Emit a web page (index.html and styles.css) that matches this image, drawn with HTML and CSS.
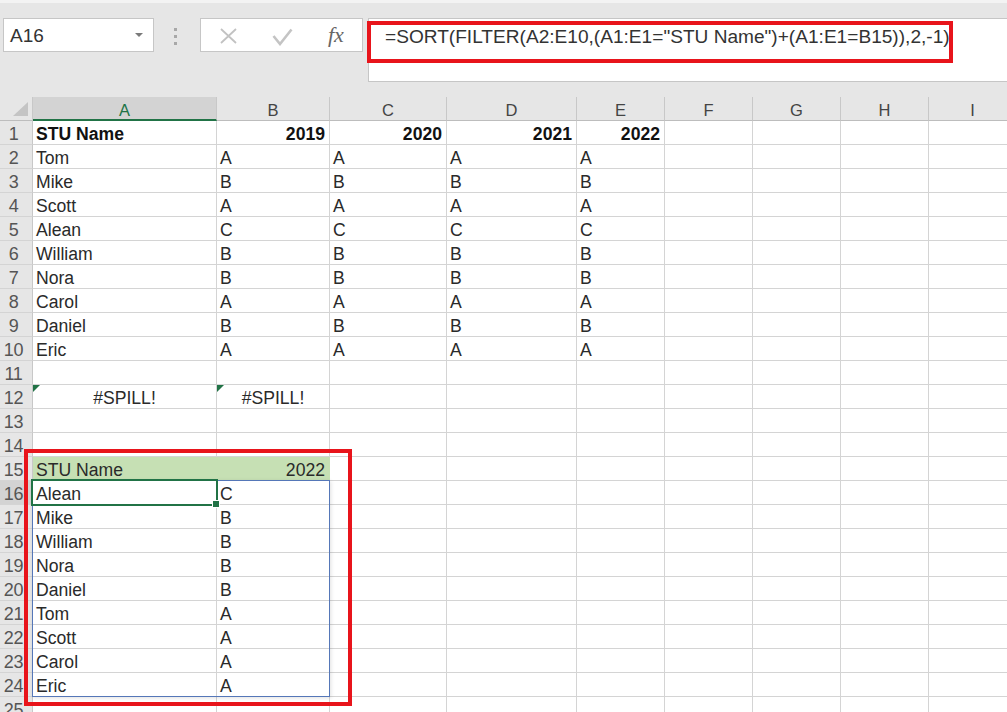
FILE: index.html
```html
<!DOCTYPE html>
<html>
<head>
<meta charset="utf-8">
<link rel="stylesheet" href="styles.css">
</head>
<body>
<div class="app">
  <div class="topstrip"></div>
  <div class="toolbar">
    <div class="namebox"><span class="nbtext">A16</span><span class="caret"></span></div>
    <div class="dots"><i></i><i></i><i></i></div>
    <div class="fbuttons">
      <svg class="ico-x" width="17" height="16" viewBox="0 0 17 16"><path d="M1 1 L16 15 M16 1 L1 15" stroke="#c2c2c2" stroke-width="1.8" fill="none"/></svg>
      <svg class="ico-ok" width="21" height="18" viewBox="0 0 21 18"><path d="M1.5 8 L8 16 L19.5 1.5" stroke="#c4c4c4" stroke-width="2.6" fill="none"/></svg>
      <span class="fx">fx</span>
    </div>
    <div class="formula"><span class="ftext">=SORT(FILTER(A2:E10,(A1:E1="STU Name")+(A1:E1=B15)),2,-1)</span></div>
  </div>

  <div class="sheet">
    <div class="row hdr"><div class="corner"><span class="tri"></span></div><div class="h sel">A</div><div class="h">B</div><div class="h">C</div><div class="h">D</div><div class="h">E</div><div class="h">F</div><div class="h">G</div><div class="h">H</div><div class="h">I</div></div>
    <div class="row"><div class="rh">1</div><div class="c b">STU Name</div><div class="c b r">2019</div><div class="c b r">2020</div><div class="c b r">2021</div><div class="c b r">2022</div><div class="c"></div><div class="c"></div><div class="c"></div><div class="c"></div></div>
    <div class="row"><div class="rh">2</div><div class="c">Tom</div><div class="c">A</div><div class="c">A</div><div class="c">A</div><div class="c">A</div><div class="c"></div><div class="c"></div><div class="c"></div><div class="c"></div></div>
    <div class="row"><div class="rh">3</div><div class="c">Mike</div><div class="c">B</div><div class="c">B</div><div class="c">B</div><div class="c">B</div><div class="c"></div><div class="c"></div><div class="c"></div><div class="c"></div></div>
    <div class="row"><div class="rh">4</div><div class="c">Scott</div><div class="c">A</div><div class="c">A</div><div class="c">A</div><div class="c">A</div><div class="c"></div><div class="c"></div><div class="c"></div><div class="c"></div></div>
    <div class="row"><div class="rh">5</div><div class="c">Alean</div><div class="c">C</div><div class="c">C</div><div class="c">C</div><div class="c">C</div><div class="c"></div><div class="c"></div><div class="c"></div><div class="c"></div></div>
    <div class="row"><div class="rh">6</div><div class="c">William</div><div class="c">B</div><div class="c">B</div><div class="c">B</div><div class="c">B</div><div class="c"></div><div class="c"></div><div class="c"></div><div class="c"></div></div>
    <div class="row"><div class="rh">7</div><div class="c">Nora</div><div class="c">B</div><div class="c">B</div><div class="c">B</div><div class="c">B</div><div class="c"></div><div class="c"></div><div class="c"></div><div class="c"></div></div>
    <div class="row"><div class="rh">8</div><div class="c">Carol</div><div class="c">A</div><div class="c">A</div><div class="c">A</div><div class="c">A</div><div class="c"></div><div class="c"></div><div class="c"></div><div class="c"></div></div>
    <div class="row"><div class="rh">9</div><div class="c">Daniel</div><div class="c">B</div><div class="c">B</div><div class="c">B</div><div class="c">B</div><div class="c"></div><div class="c"></div><div class="c"></div><div class="c"></div></div>
    <div class="row"><div class="rh">10</div><div class="c">Eric</div><div class="c">A</div><div class="c">A</div><div class="c">A</div><div class="c">A</div><div class="c"></div><div class="c"></div><div class="c"></div><div class="c"></div></div>
    <div class="row"><div class="rh">11</div><div class="c"></div><div class="c"></div><div class="c"></div><div class="c"></div><div class="c"></div><div class="c"></div><div class="c"></div><div class="c"></div><div class="c"></div></div>
    <div class="row"><div class="rh">12</div><div class="c ctr err">#SPILL!</div><div class="c ctr err">#SPILL!</div><div class="c"></div><div class="c"></div><div class="c"></div><div class="c"></div><div class="c"></div><div class="c"></div><div class="c"></div></div>
    <div class="row"><div class="rh">13</div><div class="c"></div><div class="c"></div><div class="c"></div><div class="c"></div><div class="c"></div><div class="c"></div><div class="c"></div><div class="c"></div><div class="c"></div></div>
    <div class="row"><div class="rh">14</div><div class="c"></div><div class="c"></div><div class="c"></div><div class="c"></div><div class="c"></div><div class="c"></div><div class="c"></div><div class="c"></div><div class="c"></div></div>
    <div class="row"><div class="rh">15</div><div class="c g">STU Name</div><div class="c g r">2022</div><div class="c"></div><div class="c"></div><div class="c"></div><div class="c"></div><div class="c"></div><div class="c"></div><div class="c"></div></div>
    <div class="row"><div class="rh rsel">16</div><div class="c">Alean</div><div class="c">C</div><div class="c"></div><div class="c"></div><div class="c"></div><div class="c"></div><div class="c"></div><div class="c"></div><div class="c"></div></div>
    <div class="row"><div class="rh">17</div><div class="c">Mike</div><div class="c">B</div><div class="c"></div><div class="c"></div><div class="c"></div><div class="c"></div><div class="c"></div><div class="c"></div><div class="c"></div></div>
    <div class="row"><div class="rh">18</div><div class="c">William</div><div class="c">B</div><div class="c"></div><div class="c"></div><div class="c"></div><div class="c"></div><div class="c"></div><div class="c"></div><div class="c"></div></div>
    <div class="row"><div class="rh">19</div><div class="c">Nora</div><div class="c">B</div><div class="c"></div><div class="c"></div><div class="c"></div><div class="c"></div><div class="c"></div><div class="c"></div><div class="c"></div></div>
    <div class="row"><div class="rh">20</div><div class="c">Daniel</div><div class="c">B</div><div class="c"></div><div class="c"></div><div class="c"></div><div class="c"></div><div class="c"></div><div class="c"></div><div class="c"></div></div>
    <div class="row"><div class="rh">21</div><div class="c">Tom</div><div class="c">A</div><div class="c"></div><div class="c"></div><div class="c"></div><div class="c"></div><div class="c"></div><div class="c"></div><div class="c"></div></div>
    <div class="row"><div class="rh">22</div><div class="c">Scott</div><div class="c">A</div><div class="c"></div><div class="c"></div><div class="c"></div><div class="c"></div><div class="c"></div><div class="c"></div><div class="c"></div></div>
    <div class="row"><div class="rh">23</div><div class="c">Carol</div><div class="c">A</div><div class="c"></div><div class="c"></div><div class="c"></div><div class="c"></div><div class="c"></div><div class="c"></div><div class="c"></div></div>
    <div class="row"><div class="rh">24</div><div class="c">Eric</div><div class="c">A</div><div class="c"></div><div class="c"></div><div class="c"></div><div class="c"></div><div class="c"></div><div class="c"></div><div class="c"></div></div>
    <div class="row"><div class="rh">25</div><div class="c"></div><div class="c"></div><div class="c"></div><div class="c"></div><div class="c"></div><div class="c"></div><div class="c"></div><div class="c"></div><div class="c"></div></div>
  </div>

  <div class="spill-range"></div>
  <div class="active-cell"></div>
  <div class="fill-handle"></div>
  <div class="mark mark-formula"></div>
  <div class="mark mark-range"></div>
</div>
</body>
</html>
```

FILE: styles.css
```css
html, body {
  margin: 0;
  padding: 0;
}
body {
  background: #e6e6e6;
  font-family: "Liberation Sans", Arial, sans-serif;
  overflow: hidden;
}
.app {
  position: relative;
  width: 1007px;
  height: 712px;
  overflow: hidden;
  background: #e6e6e6;
}
.topstrip {
  height: 3px;
  background: #f3f3f3;
}
.toolbar {
  height: 94px;
  box-sizing: border-box;
  padding: 15px 0 0 3px;
  display: flex;
  align-items: flex-start;
}
.namebox {
  width: 151px;
  height: 34px;
  box-sizing: border-box;
  background: #fff;
  border: 1px solid #c6c6c6;
  display: flex;
  align-items: center;
  padding: 2px 0 0 6px;
  position: relative;
}
.nbtext {
  font-size: 19px;
  color: #333;
  flex: 1;
}
.caret {
  width: 0;
  height: 0;
  border-left: 4px solid transparent;
  border-right: 4px solid transparent;
  border-top: 4px solid #7a7a7a;
  margin-right: 10px;
  margin-top: -2px;
}
.dots {
  margin: 10px 0 0 20px;
  width: 4px;
  display: flex;
  flex-direction: column;
  gap: 4px;
}
.dots i {
  display: block;
  width: 3px;
  height: 3px;
  background: #a8a8a8;
}
.fbuttons {
  margin-left: 22px;
  width: 163px;
  height: 34px;
  box-sizing: border-box;
  background: #fff;
  border: 1px solid #c6c6c6;
  display: flex;
  align-items: center;
  padding-left: 19px;
}
.ico-x {
  display: block;
  margin-top: 1px;
}
.ico-ok {
  display: block;
  margin-left: 35px;
  margin-top: 3px;
}
.fx {
  margin-left: 35px;
  font-family: "Liberation Serif", "Times New Roman", serif;
  font-style: italic;
  font-size: 22px;
  color: #666;
  margin-top: -1px;
}
.formula {
  margin-left: 5px;
  flex: 1;
  height: 64px;
  box-sizing: border-box;
  background: #fff;
  border: 1px solid #c6c6c6;
  border-right: none;
  padding: 6px 0 0 16px;
}
.ftext {
  font-size: 19.1px;
  line-height: 24px;
  color: #333;
  white-space: nowrap;
}

.sheet {
  width: 1007px;
  overflow: hidden;
  background: #fff;
}
.row {
  display: grid;
  grid-template-columns: 33px 184px 113px 117px 130px 88px 88px 88px 88px 88px;
  height: 24px;
}
.row > div {
  box-sizing: border-box;
  height: 24px;
  white-space: nowrap;
}
.hdr > div {
  background: #e6e6e6;
  border-right: 1px solid #c8c8c8;
  border-bottom: 1px solid #bdbdbd;
}
.hdr .h {
  font-size: 16.5px;
  color: #444;
  text-align: center;
  line-height: 27px;
}
.hdr .h.sel {
  background: #d3d3d3;
  color: #217346;
  border-bottom: 2px solid #217346;
}
.corner {
  position: relative;
  border-right: 1px solid #c8c8c8;
}
.tri {
  position: absolute;
  left: 13px;
  top: 5px;
  width: 0;
  height: 0;
  border-left: 15px solid transparent;
  border-bottom: 14px solid #c4c4c4;
}
.rh {
  background: #e6e6e6;
  border-right: 1px solid #c8c8c8;
  border-bottom: 1px solid #d4d4d4;
  color: #555;
  font-size: 18px;
  line-height: 27px;
  text-align: center;
  padding-right: 5px;
  letter-spacing: -0.3px;
}
.rh.rsel {
  background: #d3d3d3;
}
.c {
  background: #fff;
  border-right: 1px solid #d4d4d4;
  border-bottom: 1px solid #d4d4d4;
  font-size: 17.6px;
  line-height: 27px;
  color: #2a2a2a;
  padding: 0 3px;
}
.c.b {
  font-weight: bold;
  color: #111;
}
.c.r {
  text-align: right;
  padding-right: 4px;
}
.c.ctr {
  text-align: center;
}
.c.g {
  background: #c6e0b4;
  border-right-color: #c6e0b4;
  border-bottom-color: #c6e0b4;
}
.c.err {
  position: relative;
}
.c.err::before {
  content: "";
  position: absolute;
  left: 0;
  top: 0;
  width: 0;
  height: 0;
  border-top: 7px solid #217346;
  border-right: 7px solid transparent;
}

.spill-range {
  position: absolute;
  left: 32px;
  top: 480px;
  width: 298px;
  height: 217px;
  box-sizing: border-box;
  border: 1px solid #5577b8;
  box-shadow: 1px 1px 4px rgba(0, 0, 0, 0.12);
}
.active-cell {
  position: absolute;
  left: 31px;
  top: 479px;
  width: 187px;
  height: 27px;
  box-sizing: border-box;
  border: 2px solid #217346;
}
.fill-handle {
  position: absolute;
  left: 212px;
  top: 500px;
  width: 8px;
  height: 8px;
  box-sizing: border-box;
  background: #217346;
  border: 1px solid #fff;
}
.mark {
  position: absolute;
  box-sizing: border-box;
  border: 4px solid #e8141b;
}
.mark-formula {
  left: 367px;
  top: 21px;
  width: 586px;
  height: 42px;
}
.mark-range {
  left: 24px;
  top: 449px;
  width: 328px;
  height: 257px;
}
```
